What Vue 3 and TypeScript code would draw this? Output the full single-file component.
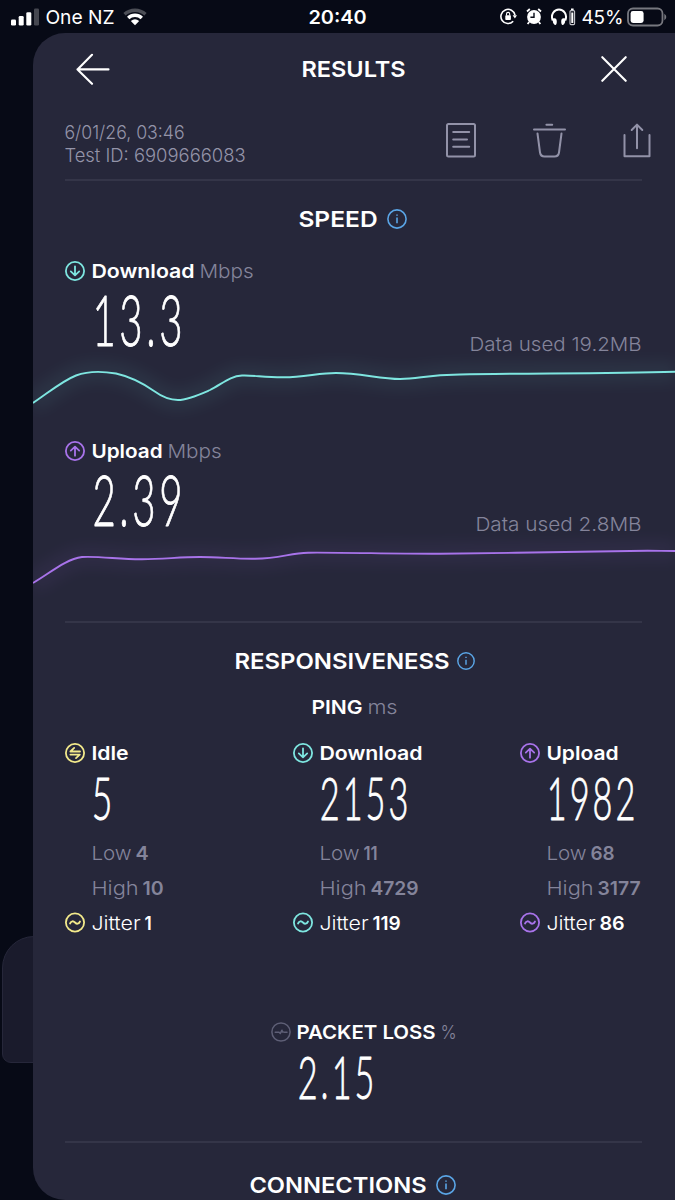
<script setup lang="ts">
import { h } from 'vue'

interface FitProps { t: string; w: number; cap?: number; pad?: number; trail?: number }

// One line of text whose box is its cap height and whose glyphs fill a given width
const Fit = (p: FitProps) => {
  const cap = Number(p.cap ?? 14)
  const pad = Number(p.pad ?? 0.6)
  return h('svg', { width: p.w, height: cap, class: 'fit' }, [
    h('text', {
      x: -pad, y: cap, 'font-size': cap / 0.725,
      textLength: Number(p.w) + pad * 2 + Number(p.trail ?? 0), lengthAdjust: 'spacingAndGlyphs',
    }, p.t),
  ])
}
Fit.props = ['t', 'w', 'cap', 'pad', 'trail']

const iconPaths: Record<string, string> = {
  down: 'M10 5.3V14.2M5.8 10.4L10 14.3L14.2 10.4',
  up: 'M10 14.7V5.8M5.8 9.6L10 5.7L14.2 9.6',
  idle: 'M15 8.5H5.4L9.2 4.9M5.4 11.6H14.8L11 15.1',
  jitter: 'M5 11C6.4 8.2 8.2 8.2 10 10S13.6 11.8 15 9',
  loss: 'M4.2 10.3H8L9.3 11.4L11 8.2L11.4 10H12.4M13.4 10.2H16',
}

const Ring = (p: { kind: string }) =>
  h('svg', { width: 20, height: 20, viewBox: '0 0 20 20', class: 'ring ' + p.kind }, [
    h('circle', { cx: 10, cy: 10, r: 9.1 }),
    h('path', { d: iconPaths[p.kind] }),
  ])
Ring.props = ['kind']

const Info = (p: { size?: number }) =>
  h('svg', { width: p.size ?? 20, height: p.size ?? 20, viewBox: '0 0 20 20', class: 'info' }, [
    h('circle', { cx: 10, cy: 10, r: 9.1 }),
    h('path', { d: 'M10 8.6V14.2M10 5.4V6.8' }),
  ])
Info.props = ['size']

const speeds = [
  {
    kind: 'down', tone: 'teal', name: 'Download', nameW: 102, value: '13.3', valueW: 87,
    used: 'Data used 19.2MB', usedW: 171, box: '33 357 642 73',
    line: 'M33 403C48 393 62 381 76 375.5C88 371 104 371.5 116 373.5C132 377 144 384 154 391C163 397.5 170 400 178 400C188 400 202 393.5 210 390C222 384 230 376 242 375.5C254 375 264 377.5 284 377.3C304 377 320 373 336 373C360 373 380 379 400 379C420 379 424 375 460 374.5C520 373 600 374 675 371.8',
  },
  {
    kind: 'up', tone: 'violet', name: 'Upload', nameW: 70, value: '2.39', valueW: 87,
    used: 'Data used 2.8MB', usedW: 165, box: '33 537 642 73',
    line: 'M33 583C50 573 66 559 82 557C100 556 120 559.5 142 559.3C165 559 180 557 200 557C220 557 235 559 255 558.7C280 558.5 290 553 308 552.7C340 552.3 400 554 440 553.7C500 553 590 552 630 551C650 550.5 660 551 675 551',
  },
]

const pings = [
  { kind: 'idle', tone: 'yellow', name: 'Idle', nameW: 36, value: '5', valueW: 18, low: '4', lowW: 12, high: '10', highW: 20, jit: '1', jitW: 6 },
  { kind: 'down', tone: 'teal', name: 'Download', nameW: 102, value: '2153', valueW: 86, low: '11', lowW: 13, high: '4729', highW: 47, jit: '119', jitW: 27 },
  { kind: 'up', tone: 'violet', name: 'Upload', nameW: 71, value: '1982', valueW: 86, low: '68', lowW: 23, high: '3177', highW: 42, jit: '86', jitW: 24 },
]
</script>

<template>
  <div class="phone">
    <header class="status">
      <div class="side">
        <svg width="28" height="18" viewBox="0 0 28 18" class="solid">
          <rect x="0" y="11.5" width="5" height="6" rx="1.3" />
          <rect x="7.7" y="8" width="5" height="9.5" rx="1.3" />
          <rect x="15.3" y="4.3" width="5" height="13.2" rx="1.3" />
          <rect x="23" y="0.5" width="5" height="17" rx="1.3" opacity=".25" />
        </svg>
        <Fit class="carrier" t="One NZ" :w="68" :cap="14" />
        <svg class="wifi" width="24" height="18" viewBox="0 0 24 18">
          <path d="M1.5 6.3C7.5 .8 16.5 .8 22.5 6.3" opacity=".28" />
          <path d="M5.2 10C9 6.4 15 6.4 18.8 10" />
          <path class="dot" d="M7.8 13Q12 9.6 16.2 13L12 17.3Z" />
        </svg>
      </div>
      <Fit class="clock" t="20:40" :w="57" :cap="14" />
      <div class="side right">
        <svg width="17" height="17" viewBox="0 0 17 17" class="stroked">
          <path d="M13.2 13.3A7.1 7.1 0 1 1 15 7.2" />
          <path class="dot" d="M12.6 7.2H17L14.9 10.6Z" />
          <rect class="dot" x="5.3" y="7.3" width="5.6" height="4.7" rx=".8" />
          <path class="thin" d="M6.5 7.5V6A1.6 1.6 0 0 1 9.7 6V7.5" />
        </svg>
        <svg class="alarm" width="16" height="17" viewBox="0 0 16 17">
          <circle cx="8" cy="9" r="6.9" />
          <path class="leg" d="M1 3.5L3.8 1M15 3.5L12.2 1M3.2 14L1.6 16M12.8 14L14.4 16" />
          <path class="hand" d="M8 4.8V9.2H4.4" />
        </svg>
        <svg class="phones" width="25" height="18" viewBox="0 0 25 18">
          <path d="M1.8 12.5C-.9 6.3 3.4 1.6 8 1.6S16.9 6.3 14.2 12.5" />
          <path class="dot" d="M2 10.5C4.5 9.6 5.8 10.8 5.8 13.5S5 17.5 3.6 16.7S1.3 13.5 2 10.5ZM14 10.5C11.5 9.6 10.2 10.8 10.2 13.5S11 17.5 12.4 16.7S14.7 13.5 14 10.5Z" />
          <rect class="cell" x="19" y="2.6" width="4.6" height="14" rx="1" />
          <path class="dot" d="M20.3 4.5H22.3V15H20.3ZM20 .6H22.6V2H20Z" />
        </svg>
        <Fit class="pct" t="45%" :w="41" :cap="14" />
        <svg width="40" height="20" viewBox="0 0 40 20">
          <rect class="shell" x="1" y="1.5" width="34.5" height="17" rx="5" />
          <rect class="charge" x="3.6" y="4" width="13" height="12" rx="2.4" />
          <path class="nub" d="M37.3 6.8Q39.3 8 39.3 10T37.3 13.2Z" />
        </svg>
      </div>
    </header>

    <div class="behind"></div>

    <main class="sheet">
      <div class="head">
        <svg width="34" height="32" viewBox="0 0 34 32" class="nav"><path d="M32.5 16.4H1.5M16 1.8L1.5 16.4L16 30.8" /></svg>
        <Fit class="title" t="RESULTS" :w="103" :cap="16" />
        <svg width="26" height="26" viewBox="0 0 26 26" class="nav"><path d="M1.3 1.2L24.7 24.8M24.7 1.2L1.3 24.8" /></svg>
      </div>

      <div class="meta">
        <div class="stamp">
          <Fit t="6/01/26, 03:46" :w="119" :cap="13.5" />
          <Fit t="Test ID: 6909666083" :w="180" :cap="13.5" />
        </div>
        <div class="tools">
          <svg width="30" height="35" viewBox="0 0 30 35"><rect x="1" y="1" width="28" height="32.6" rx="1.5" /><path d="M7.2 9H23.2M7.2 16.4H21M7.2 23.8H23.2" /></svg>
          <svg width="33" height="35" viewBox="0 0 33 35"><path d="M1 6.4H32M13.4 1.8H19.2M4.5 10.5L7 29.5Q7.6 33.5 11.5 33.5H21.5Q25.4 33.5 26 29.5L28.5 10.5" /></svg>
          <svg width="28" height="35" viewBox="0 0 28 35"><path d="M1.5 12V33.3H26.5V12M14 25.3V1.8M8.7 7L14 1.6L19.3 7" /></svg>
        </div>
      </div>
      <div class="rule"></div>

      <section class="speed">
        <div class="heading"><Fit class="title" t="SPEED" :w="78" :cap="16" /><Info class="gap10" /></div>
        <article v-for="s in speeds" :key="s.name" class="metric">
          <div class="label">
            <Ring :kind="s.kind" :class="s.tone" />
            <Fit class="bold" :t="s.name" :w="s.nameW" />
            <Fit class="muted unit" t="Mbps" :w="53" />
          </div>
          <div class="reading">
            <Fit class="digits" :t="s.value" :w="s.valueW" :cap="51" :pad="1.6" :trail="3.5" />
            <Fit class="muted" :t="s.used" :w="s.usedW" />
          </div>
          <svg class="chart" :class="s.tone" width="642" height="73" :viewBox="s.box">
            <path class="glow" :d="s.line" />
            <path :d="s.line" />
          </svg>
        </article>
      </section>
      <div class="rule"></div>

      <section class="resp">
        <div class="heading"><Fit class="title" t="RESPONSIVENESS" :w="214" :cap="16" /><Info class="gap8" :size="18" /></div>
        <div class="ping"><Fit class="bold" t="PING" :w="50" /><Fit class="muted" t="ms" :w="29" /></div>
        <div class="cols">
          <article v-for="p in pings" :key="p.name" class="col">
            <div class="label">
              <Ring :kind="p.kind" :class="p.tone" />
              <Fit class="bold" :t="p.name" :w="p.nameW" />
            </div>
            <Fit class="digits" :t="p.value" :w="p.valueW" :cap="43.5" :pad="1.3" :trail="3.2" />
            <div class="stat muted first"><Fit t="Low" :w="39" /><Fit class="strong" :t="p.low" :w="p.lowW" /></div>
            <div class="stat muted"><Fit t="High" :w="46" /><Fit class="strong" :t="p.high" :w="p.highW" /></div>
            <div class="jitter">
              <Ring kind="jitter" :class="p.tone" />
              <Fit class="light" t="Jitter" :w="48" /><Fit class="bold" :t="p.jit" :w="p.jitW" />
            </div>
          </article>
        </div>
        <div class="loss-block">
          <div class="loss-label">
            <Ring kind="loss" class="gray" />
            <Fit class="bold" t="PACKET LOSS" :w="138" />
            <Fit class="muted pc" t="%" :w="15" />
          </div>
          <Fit class="digits" t="2.15" :w="74" :cap="43.5" :pad="1.3" :trail="3.2" />
        </div>
      </section>
      <div class="rule"></div>
      <div class="heading last"><Fit class="title" t="CONNECTIONS" :w="176" :cap="16" /><Info class="gap10" /></div>
    </main>
  </div>
</template>

<style>
html, body { margin: 0; background: #070a16; }
.fit { display: block; overflow: visible; flex: none; }
.fit text { fill: currentColor; }
.digits text { letter-spacing: 0.09em; stroke: currentColor; stroke-width: 0.9px; stroke-linejoin: round; }
.ring, .info { display: block; flex: none; fill: none; stroke: currentColor; stroke-width: 1.8; stroke-linecap: round; stroke-linejoin: round; }
.ring.loss { stroke-width: 1.5; }
.info { color: #5aa5e6; stroke-width: 1.6; stroke-linecap: butt; }
</style>

<style scoped>
.phone {
  position: relative;
  width: 675px;
  height: 1200px;
  overflow: hidden;
  display: flex;
  flex-direction: column;
  background: #070a16;
  color: #fff;
  font-family: Inter, "Liberation Sans", sans-serif;
  font-weight: 400;
}
svg { display: block; flex: none; }
.status {
  height: 33px;
  flex: none;
  display: grid;
  grid-template-columns: 309px 57px 309px;
  align-items: center;
}
.side { display: flex; align-items: center; padding-left: 11px; }
.right { padding: 0 8px 0 0; justify-content: flex-end; }
.solid { fill: #fff; }
.carrier { margin: 1px 0 0 7px; }
.wifi { margin-left: 9px; fill: none; stroke: #fff; stroke-width: 3.4; }
.wifi .dot, .stroked .dot, .phones .dot { fill: #fff; stroke: none; }
.clock { font-weight: 600; margin-top: 1px; }
.stroked { fill: none; stroke: #fff; stroke-width: 1.6; }
.stroked .thin { stroke-width: 1.1; }
.alarm { margin-left: 9px; fill: #fff; }
.alarm .leg { stroke: #fff; stroke-width: 1.8; }
.alarm .hand { fill: none; stroke: #070a16; stroke-width: 1.4; }
.phones { margin-left: 9px; fill: none; stroke: #fff; stroke-width: 2; }
.phones .cell { stroke-width: 1.1; stroke: #c9c9cf; }
.pct { margin: 1px 4px 0 6px; }
.shell { fill: none; stroke: #77787f; stroke-width: 1.8; }
.charge { fill: #fff; }
.nub { fill: #77787f; }

.behind {
  position: absolute;
  left: 2px;
  top: 936px;
  width: 60px;
  height: 125px;
  border: 1px solid #26273a;
  border-radius: 32px 0 0 9px;
  background: #1a1b2c;
}
.sheet {
  position: relative;
  margin-left: 33px;
  height: 1167px;
  overflow: hidden;
  border-radius: 32px 0 0 32px;
  background: #26273a;
}
.title, .bold { font-weight: 600; }
.muted { color: #84849a; font-weight: 300; }
.light { font-weight: 300; }
.strong { font-weight: 600; }
.head {
  height: 71px;
  display: flex;
  align-items: center;
  justify-content: space-between;
  padding: 0 48px 0 43px;
}
.head .title { margin-right: 4px; }
.nav { fill: none; stroke: #fff; stroke-width: 2.1; stroke-linecap: round; stroke-linejoin: round; }
.meta {
  height: 75px;
  display: flex;
  justify-content: space-between;
  padding: 0 24px 0 32px;
}
.stamp { display: flex; flex-direction: column; gap: 9.5px; padding-top: 21px; color: #9494a9; font-weight: 300; }
.tools { display: flex; gap: 57px; padding-top: 19px; fill: none; stroke: #9292a8; stroke-width: 2; stroke-linecap: round; stroke-linejoin: round; }
.rule { height: 2px; margin: 0 33px 0 32px; background: #343548; }

.heading { height: 77px; display: flex; align-items: center; justify-content: center; }
.gap10 { margin-left: 10px; }
.gap8 { margin-left: 8px; }
.speed { height: 440px; }
.speed .heading { padding-right: 2px; height: 76px; padding-bottom: 1px; }
.metric { height: 180px; }
.label { height: 26px; display: flex; align-items: center; gap: 7px; padding-left: 32px; }
.col .label { padding-left: 0; }
.unit { margin-left: -1px; }
.reading {
  height: 62px;
  padding: 11px 34px 0 61px;
  display: flex;
  justify-content: space-between;
}
.reading .muted { margin-top: 42px; }
.digits {
  font-family: Lato, Roboto, sans-serif;
  font-weight: 300;
}
.chart { overflow: visible; fill: none; stroke: currentColor; stroke-width: 1.9; }
.glow { stroke-width: 22; opacity: .06; filter: blur(7px); }
.teal { color: #7ee6e0; }
.violet { color: #a873ea; }
.yellow { color: #f3ea8b; }
.gray { color: #5e5f76; }

.resp { height: 518px; }
.resp .heading { height: 76px; padding-left: 1px; }
.ping { height: 18px; margin-top: -1px; display: flex; gap: 6px; align-items: center; justify-content: center; }
.cols { display: grid; grid-template-columns: 228px 227px 1fr; padding-left: 32px; margin-top: 24px; }
.col .digits { margin: 9.5px 0 0 28px; }
.stat { height: 35px; display: flex; align-items: center; gap: 5px; padding-left: 27px; }
.first { margin-top: 16px; }
.jitter { height: 35px; display: flex; align-items: center; gap: 5px; }
.jitter .light { margin-left: 2px; }
.loss-block { display: flex; flex-direction: column; margin: 79px 0 0 238px; }
.loss-label { height: 26px; display: flex; align-items: center; gap: 6px; }
.loss-block .digits { margin: 10px 0 0 28px; }
.last { height: 83px; padding-right: 2px; }
</style>
